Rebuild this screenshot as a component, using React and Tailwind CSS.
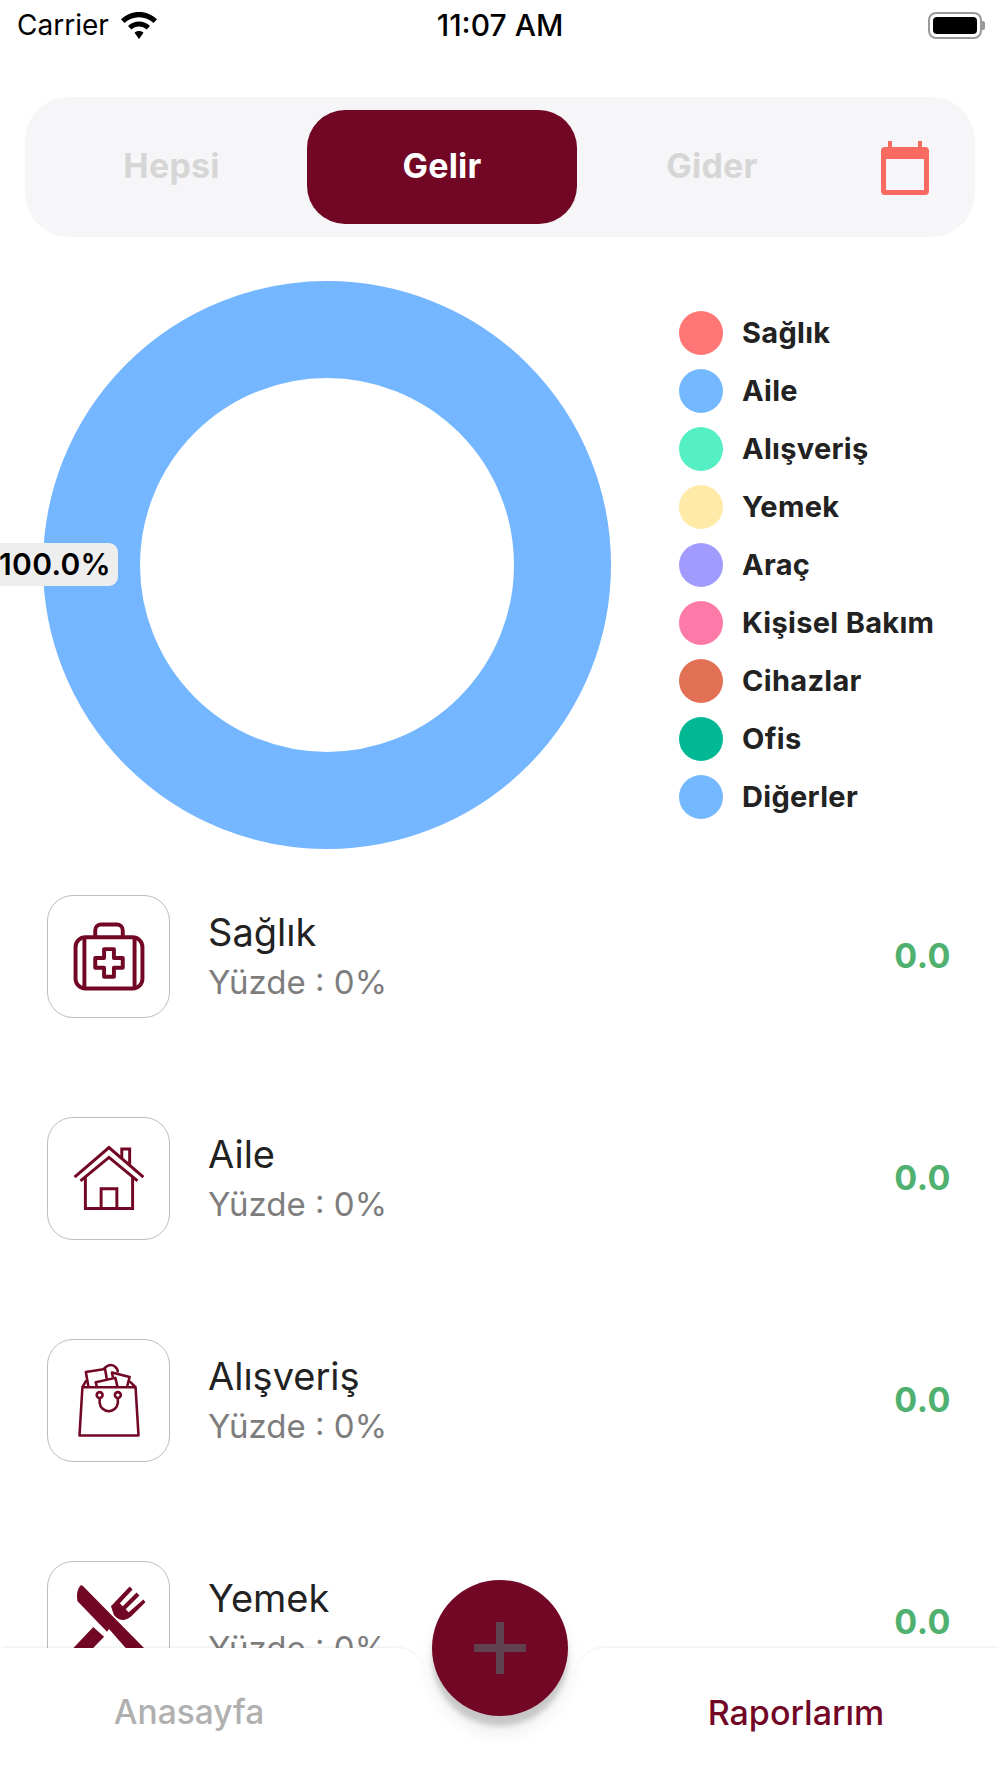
const MAROON = "#720725";

const legend = [
  ["Sağlık", "bg-[#ff7675]"],
  ["Aile", "bg-[#74b9ff]"],
  ["Alışveriş", "bg-[#55efc4]"],
  ["Yemek", "bg-[#ffeaa7]"],
  ["Araç", "bg-[#a29bfe]"],
  ["Kişisel Bakım", "bg-[#fd79a8]"],
  ["Cihazlar", "bg-[#e17055]"],
  ["Ofis", "bg-[#00b894]"],
  ["Diğerler", "bg-[#74b9ff]"],
];

function MedkitIcon() {
  return (
    <svg viewBox="0 0 123 123" className="w-full h-full" fill="none" stroke={MAROON} strokeWidth="4" strokeLinejoin="round">
      <rect x="28" y="42" width="68" height="52" rx="10" />
      <path d="M37 42v52M88 42v52M48 42v-7a6 6 0 0 1 6-6h16a6 6 0 0 1 6 6v7" />
      <path d="M57 54h10v9h9v10h-9v9H57v-9h-9V63h9z" />
    </svg>
  );
}

function HouseIcon() {
  return (
    <svg viewBox="0 0 123 123" className="w-full h-full" fill="none" stroke={MAROON} strokeWidth="3" strokeLinejoin="miter">
      <path d="M27 60L62 30L97 60" />
      <path d="M33 64L62 40L91 64" />
      <path d="M38 60v32h48V60" />
      <path d="M54 92V72h16v20" />
      <path d="M75 41V31.5h8V48" />
    </svg>
  );
}

function BagIcon() {
  return (
    <svg viewBox="0 0 123 123" className="w-full h-full" fill="none" stroke={MAROON} strokeWidth="2.6" strokeLinejoin="round">
      <path d="M35 48H89L92 97H32z" />
      <path d="M35 48l4-7M89 48l-6-6" />
      <path d="M41 47L38.5 32.5L58 29.5L60 41" />
      <path d="M49.5 47L48.5 43L68.5 38.5L70.5 47" />
      <path d="M66 38L65 33L83 37.5L80.5 47" />
      <path d="M57 29q6-6 11-2q3 2 3 6" />
      <circle cx="52.5" cy="56" r="3" />
      <circle cx="71" cy="56" r="3" />
      <path d="M52.5 59v5a9.300 9.300 0 0 0 18.500 0v-5" />
    </svg>
  );
}

function CutleryIcon() {
  return (
    <svg viewBox="0 0 123 123" className="w-full h-full" fill={MAROON}>
      <path d="M33 24Q28 30 30 40L60 71L62 68L90 100L110 100L36 25Q34 23 33 24z" />
      <path d="M64 45L83 25L86 28L73 42L76 45L90 31L93 34L79 48L82 51L97 38L99 41L85 55Q77 62 70 57L67 54z" />
      <path d="M46 66L57 76L26 108L14 100z" />
    </svg>
  );
}

function WifiIcon() {
  return (
    <svg viewBox="0 0 36 27" className="w-[36px] h-[27px]" fill="black">
      <path d="M18 0C11 0 5 2.700 0 7.300L3.500 11C7.500 7.300 12.500 5.200 18 5.200S28.500 7.300 32.500 11L36 7.300C31 2.700 25 0 18 0z" />
      <path d="M18 9.500C13.800 9.500 10 11.200 7 14L10.400 17.600C12.500 15.700 15.100 14.600 18 14.600S23.500 15.700 25.600 17.600L29 14C26 11.200 22.200 9.500 18 9.500z" />
      <path d="M18 19C16.200 19 14.700 19.600 13.500 20.800L18 27L22.500 20.800C21.300 19.600 19.800 19 18 19z" />
    </svg>
  );
}

function CalendarIcon() {
  return (
    <svg viewBox="0 0 48 54" className="w-[48px] h-[54px]" fill="#f96a60">
      <path d="M7 0h4v6h26V0h4v6h3a4 4 0 0 1 4 4v40a4 4 0 0 1-4 4H4a4 4 0 0 1-4-4V10a4 4 0 0 1 4-4h3zM5 18v31h38V18z" fillRule="evenodd" />
    </svg>
  );
}

function PlusMark() {
  return (
    <svg viewBox="0 0 52 52" className="w-[52px] h-[52px]" fill="#5f4150">
      <path d="M22 0h8v22h22v8H30v22h-8V30H0v-8h22z" />
    </svg>
  );
}

function Row({ title, icon }) {
  return (
    <div className="flex items-start h-[222px] pl-[47px] pr-[49px] shrink-0">
      <div className="w-[123px] h-[123px] rounded-[26px] border-[1.5px] border-[#bdbdbd] bg-white shrink-0">{icon}</div>
      <div className="ml-[38px] flex-1 pt-[14px]">
        <div className="text-[38px] leading-[46px] text-[#222]">{title}</div>
        <div className="text-[33px] leading-[40px] mt-[7px] text-[#7d7d7d]">Yüzde : 0%</div>
      </div>
      <div className="h-[120px] flex items-center text-[34px] font-bold text-[#4fb06f] tracking-[0.5px]">0.0</div>
    </div>
  );
}

export default function App() {
  return (
    <div className="relative w-[1000px] h-[1778px] overflow-hidden bg-white flex flex-col font-['Inter',sans-serif]">
      {/* status bar */}
      <div className="h-[50px] shrink-0 relative flex items-center pl-[17px] pr-[15px] text-black">
        <span className="text-[28px] leading-none">Carrier</span>
        <span className="ml-[12px] flex"><WifiIcon /></span>
        <span className="absolute left-0 right-0 text-center text-[30px] font-medium leading-none">11:07 AM</span>
        <div className="ml-auto flex items-center">
          <div className="w-[54px] h-[27px] rounded-[8px] border-2 border-[#9a9a9a] p-[3px]">
            <div className="w-full h-full bg-black rounded-[4px]" />
          </div>
          <div className="w-[3px] h-[9px] bg-[#9a9a9a] rounded-r-[2px]" />
        </div>
      </div>

      {/* income / expense filter */}
      <div className="mt-[47px] mx-[25px] h-[140px] shrink-0 rounded-[44px] bg-[#f6f6f8] flex items-center pl-[11px]">
        <div className="w-[271px] pb-[3px] text-center text-[34px] font-bold text-[#d6d6d6] tracking-[0.2px]">Hepsi</div>
        <div className="w-[270px] h-[114px] -mt-[1px] pb-[2px] rounded-[38px] flex items-center justify-center text-[34px] font-bold text-white bg-[#720725] tracking-[0.2px]">Gelir</div>
        <div className="w-[270px] pb-[3px] text-center text-[34px] font-bold text-[#d6d6d6] tracking-[0.2px]">Gider</div>
        <div className="ml-[34px] mt-[2px] flex"><CalendarIcon /></div>
      </div>

      {/* donut and legend */}
      <div className="relative mt-[44px] shrink-0 flex items-center pl-[43px]">
        <svg viewBox="0 0 568 568" className="w-[568px] h-[568px] shrink-0">
          <circle cx="284" cy="284" r="235.500" fill="none" stroke="#74b6ff" strokeWidth="97" />
        </svg>
        <div className="absolute left-0 top-[262px] w-[118px] h-[43px] rounded-r-[9px] bg-[#eeeeee] flex items-center justify-end pr-[7px] text-[30px] font-semibold text-black tracking-[0.3px]">
          100.0%
        </div>
        <div className="ml-[68px] flex flex-col">
          {legend.map(([name, color]) => (
            <div key={name} className="flex items-center h-[58px]">
              <span className={`w-[44px] h-[44px] rounded-full ${color}`} />
              <span className="ml-[19px] text-[29px] font-bold text-[#222] tracking-[0.3px]">{name}</span>
            </div>
          ))}
        </div>
      </div>

      {/* category rows */}
      <div className="mt-[46px] flex-1 min-h-0 overflow-hidden flex flex-col">
        <Row title="Sağlık" icon={<MedkitIcon />} />
        <Row title="Aile" icon={<HouseIcon />} />
        <Row title="Alışveriş" icon={<BagIcon />} />
        <Row title="Yemek" icon={<CutleryIcon />} />
      </div>

      {/* bottom navigation */}
      <div className="h-[130px] shrink-0 flex text-[33.500px] font-medium">
        <div className="w-[426px] rounded-tr-[30px] bg-white shadow-[0_-3px_3px_-2px_rgba(0,0,0,0.08)] flex items-center justify-center pb-[2px] pr-[48px] text-[#b0b0b0]">
          Anasayfa
        </div>
        <div className="flex-1" />
        <div className="w-[425px] rounded-tl-[30px] bg-white shadow-[0_-3px_3px_-2px_rgba(0,0,0,0.08)] flex items-center justify-center pb-[2px] pl-[17px] text-[34px] text-[#720725]">
          Raporlarım
        </div>
      </div>

      <button className="absolute left-[432px] top-[1580px] w-[136px] h-[136px] rounded-full bg-[#720725] flex items-center justify-center shadow-[0_10px_5px_rgba(0,0,0,0.16),0_16px_18px_rgba(0,0,0,0.08)]">
        <PlusMark />
      </button>
    </div>
  );
}
